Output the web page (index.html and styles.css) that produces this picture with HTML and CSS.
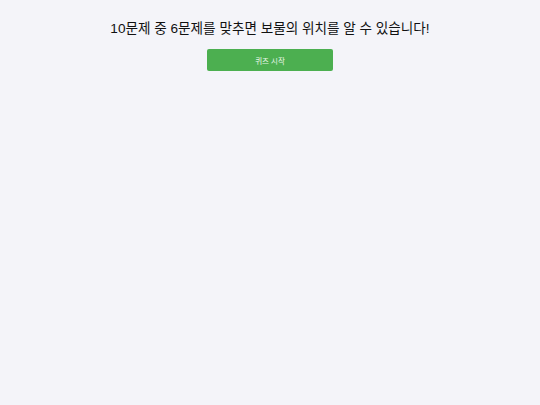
FILE: index.html
```html
<!DOCTYPE html>
<html lang="ko">
<head>
<meta charset="utf-8">
<link rel="stylesheet" href="styles.css">
</head>
<body>
<div class="container">
  <h1 class="title">10문제 중 6문제를 맞추면 보물의 위치를 알 수 있습니다!</h1>
  <button class="start-btn">퀴즈 시작</button>
</div>
</body>
</html>
```
FILE: styles.css
```css
html, body {
  margin: 0;
  padding: 0;
  background: #f4f4f9;
  font-family: "Liberation Sans", Arial, "Noto Sans CJK KR", sans-serif;
}
.container {
  display: flex;
  flex-direction: column;
  align-items: center;
  padding-top: 20px;
}
.title {
  margin: 0;
  font-size: 13.6px;
  font-weight: normal;
  color: #111;
  line-height: 18px;
}
.start-btn {
  margin-top: 11px;
  width: 126px;
  height: 22px;
  background: #4caf50;
  color: #e8f5e8;
  border: none;
  border-radius: 2px;
  font-family: "Liberation Sans", Arial, "Noto Sans CJK KR", sans-serif;
  font-size: 7.5px;
  padding: 0;
}
```
